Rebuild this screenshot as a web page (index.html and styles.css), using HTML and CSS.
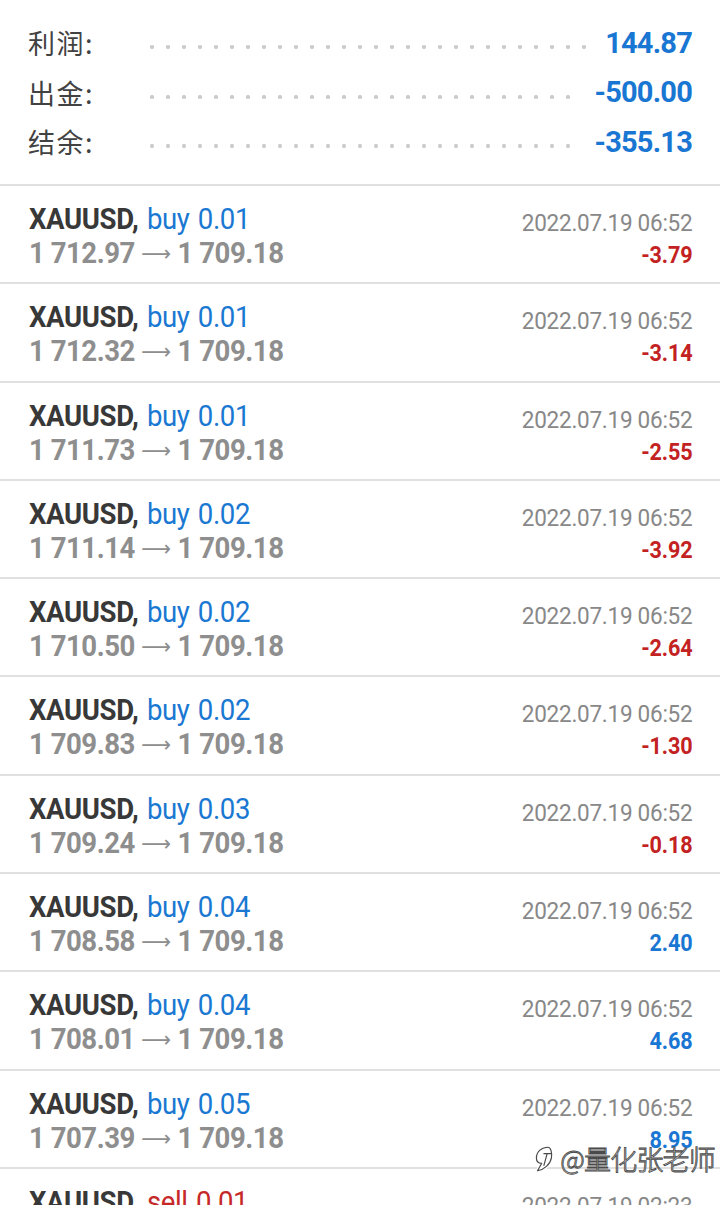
FILE: index.html
```html
<!DOCTYPE html>
<html lang="zh">
<head>
<meta charset="utf-8">
<title>History</title>
<link rel="stylesheet" href="styles.css">
</head>
<body>
<div class="page">
  <section class="summary">
    <div class="sum-row"><span class="sum-label">利润:</span><span class="leader"></span><span class="sum-value">144.87</span></div>
    <div class="sum-row"><span class="sum-label">出金:</span><span class="leader"></span><span class="sum-value">-500.00</span></div>
    <div class="sum-row"><span class="sum-label">结余:</span><span class="leader"></span><span class="sum-value">-355.13</span></div>
  </section>
  <ul class="deals">
    <li class="deal"><div class="left"><div class="l1"><b>XAUUSD,</b> <span class="buy">buy 0.01</span></div><div class="l2">1 712.97 <span class="arrow">⟶</span> 1 709.18</div></div><div class="right"><div class="date">2022.07.19 06:52</div><div class="pl neg">-3.79</div></div></li>
    <li class="deal"><div class="left"><div class="l1"><b>XAUUSD,</b> <span class="buy">buy 0.01</span></div><div class="l2">1 712.32 <span class="arrow">⟶</span> 1 709.18</div></div><div class="right"><div class="date">2022.07.19 06:52</div><div class="pl neg">-3.14</div></div></li>
    <li class="deal"><div class="left"><div class="l1"><b>XAUUSD,</b> <span class="buy">buy 0.01</span></div><div class="l2">1 711.73 <span class="arrow">⟶</span> 1 709.18</div></div><div class="right"><div class="date">2022.07.19 06:52</div><div class="pl neg">-2.55</div></div></li>
    <li class="deal"><div class="left"><div class="l1"><b>XAUUSD,</b> <span class="buy">buy 0.02</span></div><div class="l2">1 711.14 <span class="arrow">⟶</span> 1 709.18</div></div><div class="right"><div class="date">2022.07.19 06:52</div><div class="pl neg">-3.92</div></div></li>
    <li class="deal"><div class="left"><div class="l1"><b>XAUUSD,</b> <span class="buy">buy 0.02</span></div><div class="l2">1 710.50 <span class="arrow">⟶</span> 1 709.18</div></div><div class="right"><div class="date">2022.07.19 06:52</div><div class="pl neg">-2.64</div></div></li>
    <li class="deal"><div class="left"><div class="l1"><b>XAUUSD,</b> <span class="buy">buy 0.02</span></div><div class="l2">1 709.83 <span class="arrow">⟶</span> 1 709.18</div></div><div class="right"><div class="date">2022.07.19 06:52</div><div class="pl neg">-1.30</div></div></li>
    <li class="deal"><div class="left"><div class="l1"><b>XAUUSD,</b> <span class="buy">buy 0.03</span></div><div class="l2">1 709.24 <span class="arrow">⟶</span> 1 709.18</div></div><div class="right"><div class="date">2022.07.19 06:52</div><div class="pl neg">-0.18</div></div></li>
    <li class="deal"><div class="left"><div class="l1"><b>XAUUSD,</b> <span class="buy">buy 0.04</span></div><div class="l2">1 708.58 <span class="arrow">⟶</span> 1 709.18</div></div><div class="right"><div class="date">2022.07.19 06:52</div><div class="pl pos">2.40</div></div></li>
    <li class="deal"><div class="left"><div class="l1"><b>XAUUSD,</b> <span class="buy">buy 0.04</span></div><div class="l2">1 708.01 <span class="arrow">⟶</span> 1 709.18</div></div><div class="right"><div class="date">2022.07.19 06:52</div><div class="pl pos">4.68</div></div></li>
    <li class="deal"><div class="left"><div class="l1"><b>XAUUSD,</b> <span class="buy">buy 0.05</span></div><div class="l2">1 707.39 <span class="arrow">⟶</span> 1 709.18</div></div><div class="right"><div class="date">2022.07.19 06:52</div><div class="pl pos">8.95</div></div></li>
    <li class="deal"><div class="left"><div class="l1"><b>XAUUSD,</b> <span class="sell">sell 0.01</span></div><div class="l2">1 709.18 <span class="arrow">⟶</span> 1 709.18</div></div><div class="right"><div class="date">2022.07.19 02:23</div><div class="pl pos">0.00</div></div></li>
  </ul>
  <div class="watermark">
    <svg class="wm-logo" viewBox="0 0 24 28" width="26" height="30"><path d="M15 3c-6 0-11 4-11 10 0 3 2 5 5 5l-4 7c6-1 12-6 13-12 1-5-1-10-3-10z M11 9h7 M14 9l-3 11" fill="none" stroke="#fff" stroke-width="3.2" stroke-linecap="round" stroke-linejoin="round"/><path d="M15 3c-6 0-11 4-11 10 0 3 2 5 5 5l-4 7c6-1 12-6 13-12 1-5-1-10-3-10z M11 9h7 M14 9l-3 11" fill="none" stroke="#4a4a4a" stroke-width="1.1" stroke-linecap="round" stroke-linejoin="round"/></svg>
    <span class="wm-text">@量化张老师</span>
  </div>
</div>
</body>
</html>
```
FILE: styles.css
```css
* { box-sizing: border-box; }
html, body { margin: 0; padding: 0; background: #fff; }
body { width: 720px; height: 1205px; overflow: hidden; font-family: Roboto, "Noto Sans CJK SC", sans-serif; }
.page { position: relative; width: 720px; height: 1205px; overflow: hidden; }

.summary { padding: 18px 28px 0 28px; border-bottom: 2px solid #e0e0e0; height: 186px; }
.sum-row { display: flex; align-items: center; height: 49.5px; }
.sum-label { width: 116px; flex: none; font-family: "Noto Sans CJK SC", sans-serif; font-size: 27px; color: #424242; letter-spacing: 1.5px; }
.leader { flex: 1; align-self: stretch; margin-right: 16px; background-image: radial-gradient(circle, #cdcdcd 1.8px, transparent 2.4px); background-size: 16px 8px; background-repeat: repeat-x; background-position: 0 25px; }
.sum-value { font-size: 29px; font-weight: 700; color: #1976d2; letter-spacing: -0.8px; }

.deals { list-style: none; margin: 0; padding: 0; }
.deal { display: flex; justify-content: space-between; height: 98.3px; padding: 0 28px 0 29px; border-bottom: 2px solid #e0e0e0; }
.left { padding-top: 16px; transform: scaleX(0.95); transform-origin: left center; }
.l1 { font-size: 29px; line-height: 34px; color: #383838; letter-spacing: -0.4px; word-spacing: 2px; white-space: nowrap; }
.l1 b { font-weight: 700; }
.buy { color: #1a78d2; }
.sell { color: #c62828; }
.l2 { font-size: 29px; line-height: 34px; font-weight: 700; color: #8e8e8e; letter-spacing: -0.5px; white-space: nowrap; }
.arrow { font-family: "DejaVu Sans", sans-serif; font-weight: 400; font-size: 22px; letter-spacing: 0; position: relative; top: -2px; }
.right { padding-top: 22px; text-align: right; transform: scaleX(0.92); transform-origin: right center; }
.date { font-size: 24.5px; line-height: 30px; color: #888; letter-spacing: -0.3px; white-space: nowrap; }
.pl { font-size: 23.5px; line-height: 30px; font-weight: 700; margin-top: 2px; letter-spacing: -0.2px; }
.neg { color: #c32222; }
.pos { color: #1976d2; }

.watermark { position: absolute; right: 5px; top: 1139px; display: flex; align-items: center; gap: 2px; }
.wm-logo { width: 26px; height: 30px; }
.wm-text { font-family: "Noto Sans CJK SC", sans-serif; font-size: 27px; font-weight: 300; color: #fff; -webkit-text-stroke: 0.9px #4a4a4a; letter-spacing: -0.8px; }
```
